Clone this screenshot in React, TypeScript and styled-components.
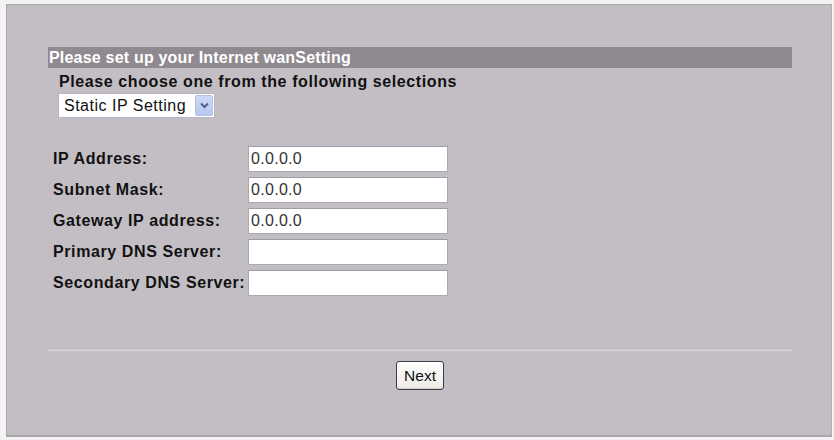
import styled, { createGlobalStyle } from "styled-components";

const GlobalStyle = createGlobalStyle`
  html, body {
    margin: 0;
    padding: 0;
    background: #f4f3f4;
  }
  body {
    font-family: "Liberation Sans", Arial, sans-serif;
  }
`;

const Panel = styled.div`
  box-sizing: border-box;
  width: 826px;
  height: 433px;
  margin: 4px 0 0 6px;
  background: #c2bec3;
  border-top: 1px solid #aaa6ab;
  border-left: 1px solid #aaa6ab;
  border-right: 1px solid #b3afb4;
  border-bottom: 2px solid #a9a5aa;
  padding: 42px 0 0 41px;
`;

const Content = styled.div`
  width: 744px;
  display: flex;
  flex-direction: column;
`;

const TitleBar = styled.div`
  height: 21px;
  line-height: 21px;
  background: #8f8a90;
  color: #ffffff;
  font-size: 16px;
  letter-spacing: 0.2px;
  font-weight: bold;
  padding-left: 1px;
`;

const Hint = styled.div`
  margin: 4px 0 0 11px;
  height: 20px;
  line-height: 20px;
  font-size: 16px;
  letter-spacing: 0.6px;
  font-weight: bold;
  color: #111;
`;

const SelectWrap = styled.div`
  position: relative;
  margin: 1px 0 0 10px;
  width: 157px;
  height: 25px;
`;

const Select = styled.select`
  appearance: none;
  box-sizing: border-box;
  width: 100%;
  height: 100%;
  border: 1px solid #b7b7c4;
  background: #ffffff;
  font-family: "Liberation Sans", Arial, sans-serif;
  font-size: 16px;
  letter-spacing: 0.5px;
  color: #111;
  padding: 0 0 0 5px;
  outline: none;
`;

const ArrowBox = styled.span`
  position: absolute;
  right: 2px;
  top: 2px;
  width: 18px;
  height: 21px;
  box-sizing: border-box;
  background: linear-gradient(#cfd9f6, #b9c7ef);
  border: 1px solid #b3c0ea;
  border-radius: 2px;
  display: flex;
  align-items: center;
  justify-content: center;
  pointer-events: none;
`;

const Form = styled.div`
  margin: 28px 0 0 5px;
  display: flex;
  flex-direction: column;
  gap: 5px;
`;

const Row = styled.div`
  display: flex;
  align-items: center;
  height: 26px;
`;

const Label = styled.label`
  width: 195px;
  font-size: 16px;
  letter-spacing: 0.6px;
  font-weight: bold;
  color: #111;
  white-space: nowrap;
`;

const Field = styled.input`
  box-sizing: border-box;
  width: 200px;
  height: 26px;
  border: 1px solid #a9a9b4;
  border-top-color: #9d9da8;
  background: #ffffff;
  font-family: "Liberation Sans", Arial, sans-serif;
  font-size: 16px;
  letter-spacing: 0.3px;
  color: #333;
  padding: 0 2px;
  outline: none;
`;

const Divider = styled.div`
  margin-top: 53px;
  height: 1px;
  background: #d9d5d6;
  border-top: 1px solid #c9c5c8;
`;

const Actions = styled.div`
  display: flex;
  justify-content: center;
  margin-top: 10px;
`;

const Button = styled.button`
  width: 48px;
  height: 29px;
  box-sizing: border-box;
  border: 1px solid #3c3c48;
  border-radius: 3px;
  background: linear-gradient(#ffffff, #eceae6);
  box-shadow: inset 0 -1px 0 #d6d0c4;
  font-family: "Liberation Sans", Arial, sans-serif;
  font-size: 15.5px;
  color: #111;
  padding: 0;
`;

const fields = [
  { label: "IP Address:", value: "0.0.0.0" },
  { label: "Subnet Mask:", value: "0.0.0.0" },
  { label: "Gateway IP address:", value: "0.0.0.0" },
  { label: "Primary DNS Server:", value: "" },
  { label: "Secondary DNS Server:", value: "" },
];

export default function App() {
  return (
    <>
      <GlobalStyle />
      <Panel>
        <Content>
          <TitleBar>Please set up your Internet wanSetting</TitleBar>
          <Hint>Please choose one from the following selections</Hint>
          <SelectWrap>
            <Select defaultValue="static">
              <option value="static">Static IP Setting</option>
              <option value="dhcp">DHCP</option>
              <option value="pppoe">PPPoE</option>
            </Select>
            <ArrowBox>
              <svg width="9" height="7" viewBox="0 0 9 7">
                <path d="M1 1.5 L4.5 5 L8 1.5" fill="none" stroke="#4b5f8e" strokeWidth="2" />
              </svg>
            </ArrowBox>
          </SelectWrap>
          <Form>
            {fields.map((f) => (
              <Row key={f.label}>
                <Label>{f.label}</Label>
                <Field defaultValue={f.value} />
              </Row>
            ))}
          </Form>
          <Divider />
          <Actions>
            <Button>Next</Button>
          </Actions>
        </Content>
      </Panel>
    </>
  );
}
